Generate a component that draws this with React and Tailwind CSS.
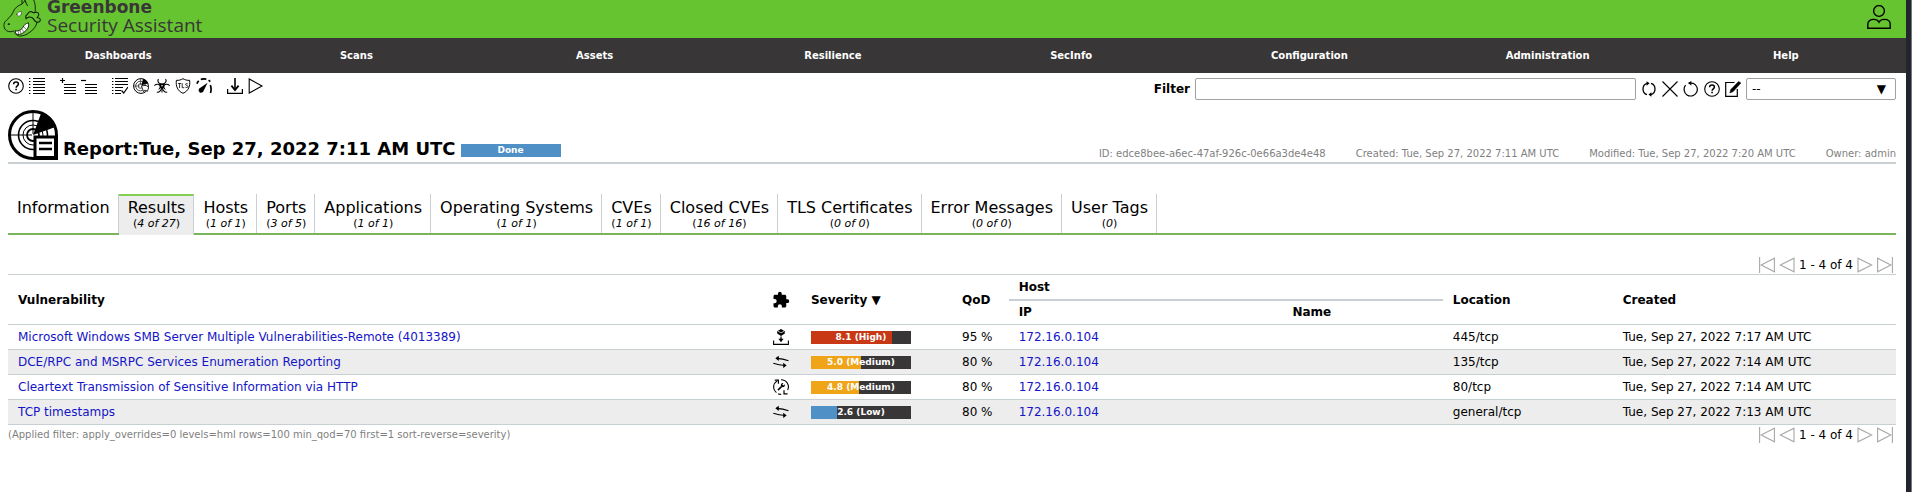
import React from 'react';
import { MdExtension } from 'react-icons/md';

function Icon({ children, size = 'size-4', box = '0 0 16 16', sw = 1.1 }) {
  return (
    <svg viewBox={box} className={`${size} block shrink-0`} fill="none" stroke="currentColor" strokeWidth={sw} aria-hidden="true">
      {children}
    </svg>
  );
}

const HelpIcon = () => (
  <Icon>
    <circle cx="8" cy="8" r="7.3" />
    <path d="M5.6 6.2C5.6 4.8 6.7 4 8 4s2.4.8 2.4 2.1c0 1.7-2.3 1.8-2.3 3.6" strokeWidth="1.5" />
    <path d="M8.1 10.8v1.5" strokeWidth="1.6" />
  </Icon>
);

const ListIcon = () => (
  <Icon>
    <path d="M0 .5h1.4M0 3.5h1.4M0 6.5h1.4M0 9.5h1.4M0 12.5h1.4M0 15.5h1.4M4 .5h12M4 3.5h12M4 6.5h12M4 9.5h12M4 12.5h12M4 15.5h12" strokeWidth="1" />
  </Icon>
);

const AddListIcon = () => (
  <Icon>
    <path d="M0 2.5h5M2.5 0v5" strokeWidth="1.2" />
    <path d="M4 6.5h12M4 9.5h12M4 12.5h12M4 15.5h12" strokeWidth="1" />
  </Icon>
);

const RemoveListIcon = () => (
  <Icon>
    <path d="M0 2.5h5" strokeWidth="1.2" />
    <path d="M4 6.5h12M4 9.5h12M4 12.5h12M4 15.5h12" strokeWidth="1" />
  </Icon>
);

const ResultIcon = () => (
  <Icon>
    <path d="M0 .5h1.4M0 3.5h1.4M0 6.5h1.4M0 9.5h1.4M0 12.5h1.4M0 15.5h1.4M3 .5h13M3 3.5h13M3 6.5h13M3 9.5h8M3 12.5h6M3 15.5h6" strokeWidth="1" />
    <path d="M9.5 12.5l2.2 2.5L16 9" strokeWidth="1.2" />
  </Icon>
);

const ScanIcon = () => (
  <Icon>
    <circle cx="8" cy="8" r="7.4" strokeWidth="1" />
    <circle cx="7.5" cy="8" r="4.8" strokeWidth="0.7" />
    <circle cx="7.5" cy="8" r="2.3" strokeWidth="0.7" />
    <path d="M0.8 8h6M7.5 1v6" strokeWidth="0.5" />
    <path d="M8.500 7.200L10 .8c2.500.6 4.300 2.200 5 4.700z" fill="currentColor" stroke="none" />
    <path d="M8.400 7.800l2.200 6 1.300-1.700 2.600 1.200 1.100-4-2.400-1.900z" fill="white" strokeWidth="0.8" />
  </Icon>
);

const BioIcon = () => (
  <Icon>
    <path d="M4.400 1C3 3.400 4.800 6.200 8 6.200s5-2.800 3.600-5.200M2.800 14.200c2.400.4 4.600-1.600 4.600-4.800M13.200 14.200c-2.400.4-4.600-1.600-4.600-4.800" strokeWidth="1.100" />
    <path d="M.4 7.600C2.600 5.600 5 6 6.600 8M15.600 7.600C13.400 5.600 11 6 9.400 8" strokeWidth="1.100" />
    <path d="M5.400 5.400h5.200L10.400 9 8 11.400 5.600 9z" fill="currentColor" stroke="none" />
    <path d="M8 10v4.500M4.800 11.500L6.400 9M11.200 11.500L9.600 9" strokeWidth="1" />
    <circle cx="8" cy="7.800" r=".8" fill="white" stroke="none" />
  </Icon>
);

const TlsIcon = () => (
  <Icon>
    <path d="M8 .7C6 2 3.600 2.500 1.400 2.300 .600 8 2.500 13 8 15.300 13.500 13 15.400 8 14.600 2.300 12.400 2.500 10 2 8 .7z" strokeWidth="1" />
    <path d="M3 5.500h3.200M4.600 5.500v4.500M7.200 5.300v4.400h2.100M12.800 5.900c-.6-.6-2.200-.5-2.200.5 0 1.200 2.400.8 2.400 2.100 0 1.200-1.900 1.300-2.600.6" strokeWidth=".8" />
  </Icon>
);

const GaugeIcon = () => (
  <Icon>
    <path d="M.9 5.800C1.300 4.600 1.900 3.700 2.700 2.900M4.800 1.500c1.700-.8 3.700-.9 5.600-.3M12.600 2.200l1.700 1.500M14.300 7.200c1 2.400 1 5.200.2 7.800" strokeWidth="1.700" />
    <path d="M11.600 4.800L7.400 13.200a2.500 2.500 0 1 1-3.800-3z" fill="currentColor" stroke="none" />
  </Icon>
);

const DownloadIcon = () => (
  <Icon>
    <path d="M.6 11v4.400h14.800V11" strokeWidth="1.200" />
    <path d="M8 0v11" strokeWidth="1.600" />
    <path d="M4.400 7.600L8 12l3.600-4.400" strokeWidth="1.800" />
  </Icon>
);

const PlayIcon = () => (
  <Icon>
    <path d="M1.200 1v14L14 8z" />
  </Icon>
);

const RefreshIcon = () => (
  <Icon>
    <path d="M6 13.600C3.400 12.900 2 10.500 2 8c0-2.700 1.600-4.800 4-5.600M10 2.400c2.600.7 4 3.100 4 5.600 0 2.700-1.600 4.800-4 5.600" strokeWidth="1.300" />
    <path d="M5.600.2v4.600L8.600 2.300zM10.400 11.200v4.600l-3-2.300z" fill="currentColor" stroke="none" />
  </Icon>
);

const CloseIcon = () => (
  <Icon>
    <path d="M.5.5l15 15M15.500.5l-15 15" />
  </Icon>
);

const ResetIcon = () => (
  <Icon>
    <path d="M2.600 4.200A6.600 6.600 0 1 0 10.200 2.300L6.500 2" strokeWidth="1.200" />
    <path d="M8.400 0v4.600L4.800 2z" fill="currentColor" stroke="none" />
  </Icon>
);

const EditIcon = () => (
  <Icon>
    <path d="M9.500 1.500H.7v13.800h11.600V8" strokeWidth="1.200" />
    <path d="M13.600.4L15.900 2 8.200 10.600 4.800 12l1-3.400z" fill="currentColor" strokeWidth=".5" />
  </Icon>
);

const UserIcon = () => (
  <Icon size="size-6" box="0 0 24 24" sw={1.4}>
    <circle cx="12" cy="6" r="5.400" />
    <path d="M.8 23.200v-4c0-3 2.500-4.800 6-4.800 2.300 0 3.800.3 5.200 2.800 1.400-2.500 2.900-2.800 5.200-2.800 3.500 0 6 1.800 6 4.800v4z" />
  </Icon>
);

const ReportIcon = () => (
  <Icon size="size-[50px]" box="0 0 50 50" sw={2}>
    <circle cx="25" cy="25" r="23.500" strokeWidth="3" />
    <circle cx="25" cy="25" r="14.500" strokeWidth="1.600" />
    <circle cx="25" cy="25" r="10" strokeWidth="1" />
    <circle cx="25" cy="25" r="6" strokeWidth="1.800" />
    <path d="M2 25h22M25 2v22" strokeWidth="1" />
    <path d="M25 25L33 3.500C40 6 45 11 47.500 17z" fill="currentColor" stroke="none" />
    <path d="M48.500 25v23.500H25" strokeWidth="3" />
    <path d="M27 27h20.500v20.500H27z" fill="white" strokeWidth="3" />
    <path d="M31 33h13M31 39h13" strokeWidth="2.400" />
  </Icon>
);

const ExploitFixIcon = () => (
  <Icon>
    <path d="M.6 11.500v3.900h14.800v-3.900" strokeWidth="1.100" />
    <path d="M4.200 2.200L8 0l3.800 2.200v2.200L8 7 4.200 4.400z" fill="currentColor" stroke="none" />
    <path d="M5 2.300l3 1.500 3-1.500" stroke="white" strokeWidth=".7" />
    <path d="M8 7.500v3" strokeWidth="1.300" />
    <path d="M5.400 9.800h5.200L8 13.200z" fill="currentColor" stroke="none" />
  </Icon>
);

const MitigateIcon = () => (
  <Icon>
    <path d="M15.500 6.800C12 5.400 8 4.600 3.500 4.400M.3 9.300c3.500 1.200 7.400 2 12 2.200" strokeWidth="1.200" />
    <path d="M5.800 1.800v5.200L2.300 4.300zM10.200 8.800V14l3.500-2.600z" fill="currentColor" stroke="none" />
  </Icon>
);

const WorkaroundIcon = () => (
  <Icon>
    <path d="M3.400 13.600C-.6 10.500-.2 4.600 4.200 1.900M8 .7c5.800 0 9 5.800 6.600 10.400M5 14.700c1 .5 2 .7 3.200.7" strokeWidth="1.100" />
    <path d="M1.800 1.200h3.600v3.600M14.600 14.800H11v-3.600" strokeWidth="1.200" />
    <path d="M5 11.100l3.800-3.800" strokeWidth="1.600" />
    <path d="M11.800 5.200L10.200 6.600 9.300 5.800 10.400 4C8.500 3.700 7.400 5.300 8 7l1.200 1.100c1.700.5 3-.9 2.600-2.900z" fill="currentColor" stroke="none" />
  </Icon>
);

const FirstIcon = () => (
  <Icon>
    <path d="M.6 0v16M15.400 1.200v13.600L2.200 8z" />
  </Icon>
);
const PrevIcon = () => (
  <Icon>
    <path d="M15 1.200v13.600L1.400 8z" />
  </Icon>
);
const NextIcon = () => (
  <Icon>
    <path d="M1 1.200v13.600L14.600 8z" />
  </Icon>
);
const LastIcon = () => (
  <Icon>
    <path d="M15.400 0v16M.6 1.200v13.600L13.800 8z" />
  </Icon>
);

const Logo = () => (
  <svg viewBox="0 0 130 112" className="h-[37px] w-[43px] shrink-0" fill="none" stroke="#0c1c06" strokeWidth="2.800" strokeLinejoin="round" strokeLinecap="round" aria-hidden="true">
    <path d="M66 0L67 12C54 17 44 24 40 36 34 50 22 58 15 66 9 75 12 88 20 93c7 4 15 4 21 1" />
    <path d="M67 12L75 2l8 15M75 0l3 6M102 0c5 10 6 24 4 38" />
    <path d="M106 38c7-3 12 1 11 7 0 4-4 6-5 9 5-1 10 1 10 7-1 6-8 8-13 5-7-4-6-10-13-13-6-3-14-1-17 4-2-5-2-9 2-12 4-3 4-9 11-10 6 0 8 6 14 3z" strokeWidth="3.200" />
    <path d="M112 68c-3 12-10 22-21 29-11 9-23 13-33 12-6-1-12-5-13-10" />
    <path d="M46 94c12 1 20-5 24-12 3-7 8-11 16-13 3 9-1 17-8 24-8 8-18 13-26 11-5-2-7-5-6-10z" fill="white" />
    <path d="M55 102l2-7M63 101l-1-7M71 96l-4-7M79 89l-6-7" strokeWidth="1.600" />
    <path d="M51 43c2-5 7-8 14-8 1 5-2 11-7 14-4-1-7-3-7-6z" fill="white" strokeWidth="1.600" />
    <path d="M24 72c2-2 5-2 7 1-2 3-5 4-8 2z" fill="#0c1c06" stroke="none" />
  </svg>
);

const menus = ['Dashboards', 'Scans', 'Assets', 'Resilience', 'SecInfo', 'Configuration', 'Administration', 'Help'];

const toolGroups = [
  [['Help', HelpIcon], ['Report list', ListIcon]],
  [['Add to assets', AddListIcon], ['Remove from assets', RemoveListIcon]],
  [['Results', ResultIcon], ['Task', ScanIcon], ['Vulnerabilities', BioIcon], ['TLS certificates', TlsIcon], ['Performance', GaugeIcon]],
  [['Download', DownloadIcon], ['Trigger alert', PlayIcon]],
];

const filterTools = [
  ['Update filter', RefreshIcon],
  ['Remove filter', CloseIcon],
  ['Reset filter', ResetIcon],
  ['Filter help', HelpIcon],
  ['Edit filter', EditIcon],
];

const tabs = [
  ['Information', null],
  ['Results', '4 of 27'],
  ['Hosts', '1 of 1'],
  ['Ports', '3 of 5'],
  ['Applications', '1 of 1'],
  ['Operating Systems', '1 of 1'],
  ['CVEs', '1 of 1'],
  ['Closed CVEs', '16 of 16'],
  ['TLS Certificates', '0 of 0'],
  ['Error Messages', '0 of 0'],
  ['User Tags', '0'],
];

const rows = [
  { name: 'Microsoft Windows SMB Server Multiple Vulnerabilities-Remote (4013389)', Fix: ExploitFixIcon, score: 8.1, level: 'High', color: 'bg-[#c83814]', qod: '95 %', ip: '172.16.0.104', loc: '445/tcp', created: 'Tue, Sep 27, 2022 7:17 AM UTC' },
  { name: 'DCE/RPC and MSRPC Services Enumeration Reporting', Fix: MitigateIcon, score: 5, level: 'Medium', color: 'bg-[#f0a519]', qod: '80 %', ip: '172.16.0.104', loc: '135/tcp', created: 'Tue, Sep 27, 2022 7:14 AM UTC' },
  { name: 'Cleartext Transmission of Sensitive Information via HTTP', Fix: WorkaroundIcon, score: 4.8, level: 'Medium', color: 'bg-[#f0a519]', qod: '80 %', ip: '172.16.0.104', loc: '80/tcp', created: 'Tue, Sep 27, 2022 7:14 AM UTC' },
  { name: 'TCP timestamps', Fix: MitigateIcon, score: 2.6, level: 'Low', color: 'bg-[#4f91c7]', qod: '80 %', ip: '172.16.0.104', loc: 'general/tcp', created: 'Tue, Sep 27, 2022 7:13 AM UTC' },
];

function IconButton({ label, children }) {
  return (
    <button type="button" aria-label={label} className="block">
      {children}
    </button>
  );
}

function Pagination() {
  return (
    <div className="flex items-center gap-1 pr-[3px] text-[#a8a8a8]">
      <IconButton label="First"><FirstIcon /></IconButton>
      <IconButton label="Previous"><PrevIcon /></IconButton>
      <span className="text-black">1 - 4 of 4</span>
      <IconButton label="Next"><NextIcon /></IconButton>
      <IconButton label="Last"><LastIcon /></IconButton>
    </div>
  );
}

function SeverityBar({ score, level, color }) {
  return (
    <div className="relative h-[13px] w-[100px] bg-[#393637]">
      <div className={`h-full ${color}`} style={{ width: `${score * 10}%` }} />
      <span className="absolute inset-0 text-center text-[9px] leading-[13px] font-bold text-white">
        {score.toFixed(1)} ({level})
      </span>
    </div>
  );
}

export default function App() {
  return (
    <div className="flex min-h-screen bg-white font-['DejaVu_Sans',sans-serif] text-[12px] leading-4 text-black">
      <div className="min-w-0 flex-1">
        <header className="flex h-[38px] items-start justify-between bg-[#66c430] pr-[15px]">
          <div className="flex items-start gap-1">
            <Logo />
            <div className="flex flex-col text-[#393637]">
              <span className="text-[17px] leading-[14px] font-bold">Greenbone</span>
              <span className="font-['Open_Sans','Noto_Sans',sans-serif] text-[19px] leading-[22px]">Security Assistant</span>
            </div>
          </div>
          <button type="button" aria-label="User" className="mt-[5px]"><UserIcon /></button>
        </header>

        <nav className="grid h-[35px] grid-cols-8 items-center bg-[#393637] text-center text-[10px] font-bold text-white">
          {menus.map((m) => (
            <a key={m} href="#" className="pr-[2px]">{m}</a>
          ))}
        </nav>

        <main className="pr-[10px] pl-2">
          <div className="flex items-start justify-between pt-[5px]">
            <div className="flex gap-[15px]">
              {toolGroups.map((group, i) => (
                <div key={i} className="flex gap-[5px]">
                  {group.map(([label, Glyph]) => (
                    <IconButton key={label} label={label}><Glyph /></IconButton>
                  ))}
                </div>
              ))}
            </div>
            <div className="flex items-center gap-[5px]">
              <label htmlFor="filter" className="text-[12px] font-bold">Filter</label>
              <input id="filter" type="text" className="h-[22px] w-[441px] rounded-[2px] border border-[#a1a1a1] bg-white px-2 outline-none" />
              <div className="flex gap-[5px]">
                {filterTools.map(([label, Glyph]) => (
                  <IconButton key={label} label={label}><Glyph /></IconButton>
                ))}
              </div>
              <div className="relative">
                <select aria-label="Saved filter" className="block h-[22px] w-[150px] appearance-none rounded-[2px] border border-[#a1a1a1] bg-white px-[5px] outline-none">
                  <option>--</option>
                </select>
                <span className="pointer-events-none absolute top-[3px] right-[10px]">▼</span>
              </div>
            </div>
          </div>

          <div className="mt-[10px] flex items-end justify-between border-b-2 border-[#c8d0d4] pb-[2px]">
            <div className="flex items-end gap-[5px]">
              <ReportIcon />
              <h1 className="text-[18px] leading-[22px] font-bold">Report:Tue, Sep 27, 2022 7:11 AM UTC</h1>
              <div className="mb-[3px] h-[13px] w-[100px] bg-[#4f91c7] text-center text-[9px] leading-[13px] font-bold text-white">Done</div>
            </div>
            <div className="flex gap-[30px] text-[10px] leading-3 text-[#7f7f7f]">
              <span>ID: edce8bee-a6ec-47af-926c-0e66a3de4e48</span>
              <span>Created: Tue, Sep 27, 2022 7:11 AM UTC</span>
              <span>Modified: Tue, Sep 27, 2022 7:20 AM UTC</span>
              <span>Owner: admin</span>
            </div>
          </div>

          <div role="tablist" className="mt-[30px] flex border-b-2 border-[#7ab55c]">
            {tabs.map(([title, count]) => {
              const active = title === 'Results';
              return (
                <button
                  key={title}
                  type="button"
                  role="tab"
                  aria-selected={active}
                  className={
                    active
                      ? 'relative -mb-[2px] flex h-[41px] flex-col items-center border-t-2 border-r border-t-[#84ce54] border-r-[#c8d0d4] bg-[#ededed] pt-[3px] pr-2 pl-[9px]'
                      : 'flex h-[39px] flex-col items-center border-r border-[#c8d0d4] pt-[5px] pr-2 pl-[9px]'
                  }
                >
                  <span className="text-[16px] leading-[18px]">{title}</span>
                  {count && <span className="text-[11px] leading-[14px]">(<i>{count}</i>)</span>}
                </button>
              );
            })}
          </div>

          <div className="mt-[22px] flex justify-end"><Pagination /></div>

          <table className="mt-px w-full table-fixed border-collapse text-left">
            <colgroup>
              <col className="w-[40%]" />
              <col className="w-[2%]" />
              <col className="w-[8%]" />
              <col className="w-[3%]" />
              <col className="w-[14.5%]" />
              <col className="w-[8.5%]" />
              <col className="w-[9%]" />
              <col className="w-[15%]" />
            </colgroup>
            <thead className="border-y border-[#c8d0d4]">
              <tr className="h-[25px]">
                <th rowSpan={2} className="px-[10px]">Vulnerability</th>
                <th rowSpan={2} className="px-[9px]"><MdExtension className="size-[18px]" aria-label="Solution type" /></th>
                <th rowSpan={2} className="px-[10px]">Severity ▼</th>
                <th rowSpan={2} className="px-[10px]">QoD</th>
                <th colSpan={2} className="border-b-2 border-[#c8d0d4] px-[10px]">Host</th>
                <th rowSpan={2} className="px-[10px]">Location</th>
                <th rowSpan={2} className="px-[10px]">Created</th>
              </tr>
              <tr className="h-[25px]">
                <th className="px-[10px]">IP</th>
                <th className="px-[10px]">Name</th>
              </tr>
            </thead>
            <tbody>
              {rows.map((r) => (
                <tr key={r.name} className="h-[25px] border-b border-[#c8d0d4] even:bg-[#ededed]">
                  <td className="px-[10px]"><a href="#" className="text-[#1414c8]">{r.name}</a></td>
                  <td className="px-[10px]"><r.Fix /></td>
                  <td className="px-[10px]"><SeverityBar score={r.score} level={r.level} color={r.color} /></td>
                  <td className="px-[10px]">{r.qod}</td>
                  <td className="px-[10px]"><a href="#" className="text-[#1414c8]">{r.ip}</a></td>
                  <td className="px-[10px]" />
                  <td className="px-[10px]">{r.loc}</td>
                  <td className="px-[10px]">{r.created}</td>
                </tr>
              ))}
            </tbody>
          </table>

          <div className="mt-[2px] flex items-center justify-between">
            <span className="text-[10px] text-[#7f7f7f]">(Applied filter: apply_overrides=0 levels=hml rows=100 min_qod=70 first=1 sort-reverse=severity)</span>
            <Pagination />
          </div>
        </main>
      </div>
      <div className="w-[6px] shrink-0 border-r border-[#77787c] bg-[#22252e]" />
    </div>
  );
}
